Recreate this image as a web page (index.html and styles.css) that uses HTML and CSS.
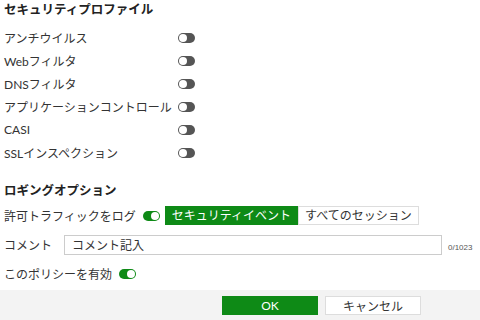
FILE: index.html
```html
<!DOCTYPE html>
<html lang="ja">
<head>
    <meta charset="UTF-8">
    <meta name="viewport" content="width=device-width, initial-scale=1.0">
    <title>ポリシー設定</title>
    <link rel="stylesheet" href="styles.css">
</head>
<body>
    <div class="content">
        <h2 class="section-title">セキュリティプロファイル</h2>
        <div class="profile-list">
            <div class="row"><span class="label">アンチウイルス</span><span class="toggle"></span></div>
            <div class="row"><span class="label">Webフィルタ</span><span class="toggle"></span></div>
            <div class="row"><span class="label">DNSフィルタ</span><span class="toggle"></span></div>
            <div class="row"><span class="label">アプリケーションコントロール</span><span class="toggle"></span></div>
            <div class="row"><span class="label">CASI</span><span class="toggle"></span></div>
            <div class="row"><span class="label">SSLインスペクション</span><span class="toggle"></span></div>
        </div>

        <h2 class="section-title logging">ロギングオプション</h2>
        <div class="option-row">
            <span>許可トラフィックをログ</span>
            <span class="toggle on"></span>
            <div class="segmented">
                <button class="seg active">セキュリティイベント</button>
                <button class="seg">すべてのセッション</button>
            </div>
        </div>
        <div class="option-row comment-row">
            <span class="comment-label">コメント</span>
            <input class="comment-input" type="text" value="コメント記入">
            <span class="counter">0/1023</span>
        </div>
        <div class="option-row">
            <span>このポリシーを有効</span>
            <span class="toggle on"></span>
        </div>
    </div>

    <div class="footer">
        <button class="btn btn-ok">OK</button>
        <button class="btn btn-cancel">キャンセル</button>
    </div>
</body>
</html>
```

FILE: styles.css
```css
body {
    font-family: Lato, "Noto Sans CJK JP", sans-serif;
    margin: 0;
    width: 480px;
    height: 320px;
    background-color: #fff;
    color: #333;
    font-size: 12px;
    overflow: hidden;
    white-space: nowrap;
}

.content {
    height: 290px;
    padding: 0 4px;
    box-sizing: border-box;
}

.section-title {
    margin: 0;
    height: 20px;
    line-height: 20px;
    font-size: 12.5px;
    font-weight: bold;
    color: #222;
}

.profile-list {
    margin-top: 6px;
}

.row {
    display: flex;
    align-items: center;
    height: 23px;
}

.row .label {
    width: 174px;
}

/* Toggle switch */
.toggle {
    position: relative;
    display: inline-block;
    flex-shrink: 0;
    width: 17px;
    height: 10px;
    border-radius: 5px;
    background-color: #555;
}

.toggle::after {
    content: "";
    position: absolute;
    top: 1px;
    left: 1px;
    width: 8px;
    height: 8px;
    border-radius: 50%;
    background-color: #fff;
}

.toggle.on {
    background-color: #0e8a16;
}

.toggle.on::after {
    left: 8px;
}

.logging {
    margin-top: 17px;
}

.option-row {
    display: flex;
    align-items: center;
    height: 29px;
}

.option-row .toggle {
    margin-left: 7px;
}

.segmented {
    display: flex;
    margin-left: 5px;
}

.seg {
    font-family: inherit;
    font-size: 12px;
    height: 19px;
    padding: 0 6px;
    border: 1px solid #ddd;
    background-color: #fff;
    color: #333;
    line-height: 17px;
}

.seg.active {
    background-color: #0e8a16;
    border-color: #0e8a16;
    color: #fff;
}

.comment-label {
    width: 60px;
}

.comment-input {
    width: 378px;
    height: 20px;
    box-sizing: border-box;
    border: 1px solid #ccc;
    padding: 0 7px;
    font-family: inherit;
    font-size: 12px;
    color: #333;
}

.counter {
    font-size: 8px;
    color: #555;
    margin-left: 6px;
    margin-top: 6px;
    font-family: "Liberation Sans", sans-serif;
}

.footer {
    height: 30px;
    background-color: #f3f3f3;
    display: flex;
    align-items: center;
    padding-left: 222px;
    gap: 7px;
}

.btn {
    font-family: inherit;
    font-size: 12px;
    width: 96px;
    height: 19px;
    padding: 0;
    border: 1px solid #ddd;
    background-color: #fff;
    color: #333;
}

.btn-ok {
    background-color: #0e8a16;
    border-color: #0e8a16;
    color: #fff;
}
```
